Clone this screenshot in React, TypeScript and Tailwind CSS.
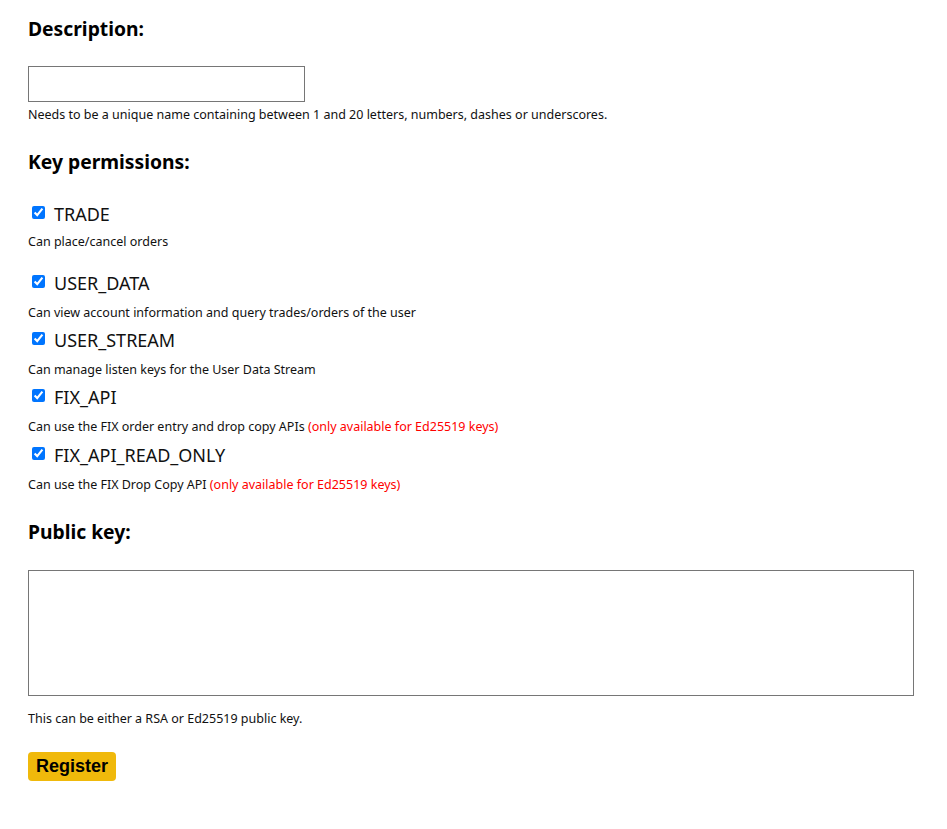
const font = { fontFamily: '"Noto Sans", "Open Sans", sans-serif' }

interface Permission {
  name: string
  text: string
  note?: string
  gap: string
}

const permissions: Permission[] = [
  { name: "TRADE", text: "Can place/cancel orders", gap: "mt-[30px]" },
  { name: "USER_DATA", text: "Can view account information and query trades/orders of the user", gap: "mt-[22px]" },
  { name: "USER_STREAM", text: "Can manage listen keys for the User Data Stream", gap: "mt-[8px]" },
  {
    name: "FIX_API",
    text: "Can use the FIX order entry and drop copy APIs",
    note: "(only available for Ed25519 keys)",
    gap: "mt-[8px]",
  },
  {
    name: "FIX_API_READ_ONLY",
    text: "Can use the FIX Drop Copy API",
    note: "(only available for Ed25519 keys)",
    gap: "mt-[9px]",
  },
]

function Heading({ children, className }: { children: string; className: string }) {
  return <h3 className={`text-[19.3px] leading-[24px] font-bold text-black ${className}`}>{children}</h3>
}

function Help({ children, className }: { children: React.ReactNode; className: string }) {
  return <p className={`text-[12.5px] leading-[18px] text-[#111] ${className}`}>{children}</p>
}

export default function App() {
  return (
    <div className="min-h-[829px] bg-white px-[28px] pt-[17px]" style={font}>
      <Heading className="">Description:</Heading>
      <input type="text" className="mt-[25px] block h-[36px] w-[277px] border border-[#767676] px-2 text-[14px]" />
      <Help className="mt-[4px]">
        Needs to be a unique name containing between 1 and 20 letters, numbers, dashes or underscores.
      </Help>

      <Heading className="mt-[26px]">Key permissions:</Heading>
      {permissions.map((p, i) => (
        <div key={p.name} className={p.gap}>
          <label className="flex h-[20px] items-center">
            <input type="checkbox" defaultChecked className="ml-[4px] mr-[9px] h-[13px] w-[13px] -translate-y-[2px] accent-[#0075ff]" />
            <span className="text-[18px] leading-[20px] text-[#111]">{p.name}</span>
          </label>
          <Help className={i === 0 ? "mt-[9px]" : "mt-[11px]"}>
            {p.text}
            {p.note && <span className="text-[#ff0000]"> {p.note}</span>}
          </Help>
        </div>
      ))}

      <Heading className="mt-[26px]">Public key:</Heading>
      <textarea className="mt-[26px] block h-[126px] w-[886px] resize-none border border-[#767676]" />
      <Help className="mt-[14px]">This can be either a RSA or Ed25519 public key.</Help>

      <button
        className="mt-[24px] h-[29px] rounded-[4px] bg-[#f0b90b] px-[8px] text-[18px] font-bold text-black"
        style={{ fontFamily: '"Liberation Sans", Arial, sans-serif' }}
      >
        Register
      </button>
    </div>
  )
}
